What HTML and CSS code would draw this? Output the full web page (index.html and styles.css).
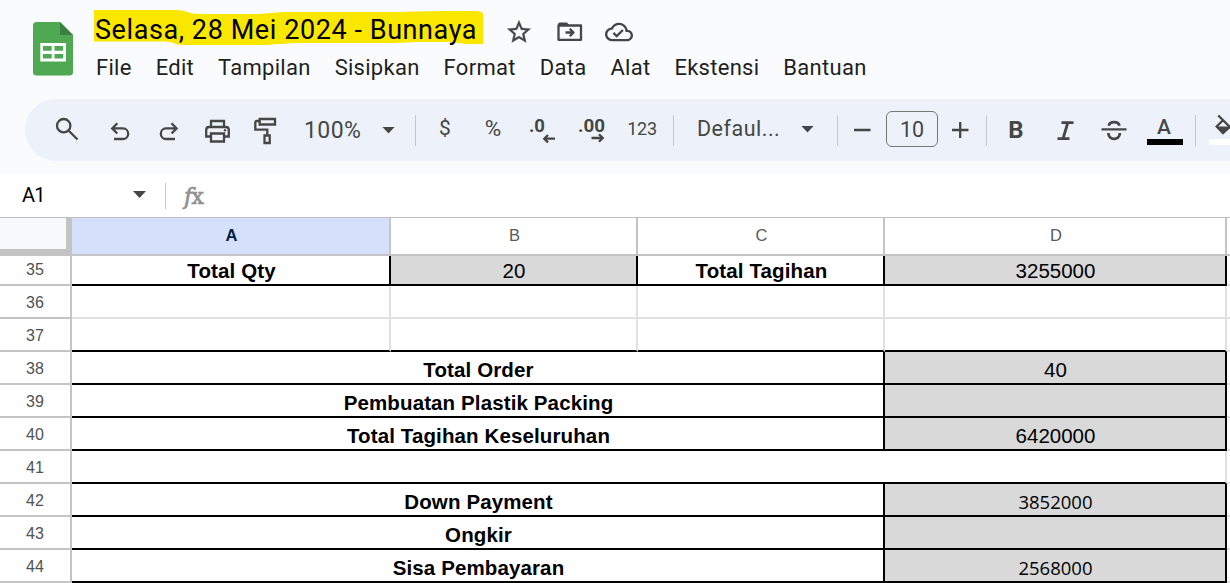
FILE: index.html
```html
<!DOCTYPE html>
<html lang="id">
<head>
    <meta charset="UTF-8">
    <meta name="viewport" content="width=device-width, initial-scale=1.0">
    <title>Selasa, 28 Mei 2024 - Bunnaya</title>
    <link rel="stylesheet" href="styles.css">
</head>
<body>
    <header class="header">
        <svg class="logo" width="40" height="54" viewBox="0 0 40 54">
            <path fill="#4fa953" d="M3.5 0H27l13 13V50a3.500 3.500 0 0 1-3.500 3.500h-33A3.500 3.500 0 0 1 0 50V3.500A3.500 3.500 0 0 1 3.500 0z"/>
            <path fill="#3b8040" d="M27 0l13 13H27z"/>
            <path fill="#fff" fill-rule="evenodd" d="M7.300 21H33v18.500H7.300zM10 24v4.700h8.700V24zM21.500 24v4.700h8.700V24zM10 32v4.500h8.700V32zM21.500 32v4.500h8.700V32z"/>
        </svg>
        <div class="header-main">
            <div class="title-row">
                <div class="doc-title">
                    <svg class="marker" width="390" height="36" viewBox="0 0 390 36">
                        <path fill="#f9e700" d="M0 0H82C92 0 94 4 106 4H160C175 4 180 2 194 2H305C330 1 350 1 380 1Q389 1 389 4V34H376C366 34 364 32 352 32H325L300 33H210C190 33 180 35 165 35H90C80 35 80 31.500 70 31.500H0z"/>
                    </svg>
                    <h1 class="title-text">Selasa, 28 Mei 2024 - Bunnaya</h1>
                </div>
                <svg class="icon-star" width="28" height="28" viewBox="0 0 24 24"><path fill="#444746" stroke="#444746" stroke-width=".3" d="M22 9.240l-7.190-.62L12 2 9.190 8.630 2 9.240l5.460 4.730L5.820 21 12 17.270 18.180 21l-1.630-7.030L22 9.240zM12 15.400l-3.760 2.270 1-4.280-3.320-2.880 4.380-.38L12 6.100l1.710 4.040 4.380.38-3.320 2.880 1 4.280L12 15.400z"/></svg>
                <svg class="icon-folder" width="26" height="20" viewBox="0 0 26 20">
                    <path fill="#444746" d="M1 4V2.500A2 2 0 0 1 3 .5h7L13 4z"/>
                    <path class="stroke" stroke-linejoin="round" d="M1.500 3.500H24V17.800H1.500z M8.500 10.500H16 M12.800 6.800l3.700 3.700-3.700 3.700"/>
                </svg>
                <svg class="icon-cloud" width="28" height="28" viewBox="0 0 24 24"><path fill="#444746" d="M19.350 10.040C18.670 6.590 15.640 4 12 4 9.110 4 6.600 5.640 5.350 8.040 2.340 8.360 0 10.910 0 14c0 3.310 2.690 6 6 6h13c2.760 0 5-2.240 5-5 0-2.640-2.050-4.780-4.650-4.960zM19 18H6c-2.210 0-4-1.790-4-4 0-2.050 1.530-3.760 3.560-3.970l1.070-.11.5-.95C8.080 7.140 9.940 6 12 6c2.620 0 4.880 1.860 5.390 4.430l.3 1.500 1.530.11c1.560.1 2.780 1.410 2.780 2.960 0 1.650-1.350 3-3 3zm-9-3.820l-2.090-2.090L6.500 13.500 10 17l6.010-6.010-1.410-1.410z"/></svg>
            </div>
            <nav class="menu">
                <span class="menu-item">File</span>
                <span class="menu-item">Edit</span>
                <span class="menu-item">Tampilan</span>
                <span class="menu-item">Sisipkan</span>
                <span class="menu-item">Format</span>
                <span class="menu-item">Data</span>
                <span class="menu-item">Alat</span>
                <span class="menu-item">Ekstensi</span>
                <span class="menu-item">Bantuan</span>
            </nav>
        </div>
    </header>

    <div class="toolbar">
        <div class="tool"><svg width="30" height="30"><path class="stroke" d="M16.500 15.500l9 9"/><circle class="stroke" cx="11.700" cy="10.700" r="6.700"/></svg></div>
        <div class="tool undo"><svg width="30" height="30"><path class="stroke" d="M12.300 8.300L7.200 13.400l5.100 5.100M7.200 13.400H18a5.200 5.300 0 0 1 0 10.600H9"/></svg></div>
        <div class="tool"><svg width="30" height="30"><path class="stroke" d="M18.500 8.300l5.100 5.100-5.100 5.100M23.600 13.400H13a5.200 5.300 0 0 0 0 10.600H22"/></svg></div>
        <div class="tool print"><svg width="30" height="30"><path class="stroke" d="M9 12V6h13v6M9 21.500H4.200V15q0-3 3-3h16.600q3 0 3 3v6.500H22M9 18.500h13v8H9z"/><circle cx="23" cy="15.300" r="1.200" fill="#444746"/></svg></div>
        <div class="tool"><svg width="30" height="30"><path class="stroke" d="M9.700 4h15.300v5.500H9.700zM9.700 6H6.800Q5.300 6 5.300 7.500V14.700H17.300V20M14.500 20.500h5.200v7.500h-5.200z"/></svg></div>
        <div class="zoom-label">100%</div>
        <i class="caret zoom-caret"></i>
        <i class="divider after-zoom"></i>
        <div class="tool currency">$</div>
        <div class="tool percent">%</div>
        <div class="tool decimal"><svg width="30" height="30"><text class="dec" x="2" y="16.500" textLength="16" lengthAdjust="spacingAndGlyphs">.0</text><path class="stroke" d="M28 23.700H17.500M21 20l-3.700 3.700 3.700 3.700"/></svg></div>
        <div class="tool decimal-more"><svg width="30" height="30"><text class="dec" x="1" y="16.500" textLength="27" lengthAdjust="spacingAndGlyphs">.00</text><path class="stroke" d="M14.500 23H25.500M22 19.300l3.700 3.700-3.700 3.700"/></svg></div>
        <div class="tool number">123</div>
        <i class="divider after-number"></i>
        <div class="font-label">Defaul...</div>
        <i class="caret font-caret"></i>
        <i class="divider after-font"></i>
        <svg class="minus" width="24" height="24"><path class="stroke" d="M4 12h16.500"/></svg>
        <div class="size-box">10</div>
        <svg class="plus" width="24" height="24"><path class="stroke" d="M4 12h16.500M12.200 4v16"/></svg>
        <i class="divider after-size"></i>
        <div class="tool bold">B</div>
        <div class="tool italic"><svg width="30" height="30"><path class="stroke thick" d="M11.500 7.700H23.500M7.500 23.700H19.500M17.700 8l-4.600 15.500"/></svg></div>
        <div class="tool strike"><svg width="30" height="30"><path class="stroke" d="M2.500 14.400H27.500"/><path class="stroke thick" d="M9.800 10.700C10.500 5.800 19.700 5.800 20.400 10.700M9.400 18C9.400 25.800 20.800 25.800 20.800 18"/></svg></div>
        <div class="text-color"><span class="letter">A</span><span class="swatch"></span></div>
        <i class="divider after-color"></i>
        <div class="fill-color">
            <svg width="30" height="24"><path class="stroke" d="M9.300.5l11.500 11.500-6.800 6-6.300-6.500 6-6"/><path fill="#444746" d="M6.500 11.500h15.500l-8 8z"/></svg>
            <span class="swatch white"></span>
        </div>
    </div>

    <div class="formula-bar">
        <span class="cell-name">A1</span>
        <i class="caret"></i>
        <i class="divider"></i>
        <span class="fx"><em>f</em>x</span>
    </div>

    <main class="sheet">
        <div class="row col-heads">
            <div class="corner"></div>
            <div class="head active">A</div>
            <div class="head">B</div>
            <div class="head">C</div>
            <div class="head">D</div>
            <div class="head"></div>
        </div>
        <div class="row first">
            <div class="row-num">35</div>
            <div class="cell line label">Total Qty</div>
            <div class="cell line gray">20</div>
            <div class="cell line label">Total Tagihan</div>
            <div class="cell line gray">3255000</div>
            <div class="cell"></div>
        </div>
        <div class="row">
            <div class="row-num">36</div>
            <div class="cell"></div>
            <div class="cell"></div>
            <div class="cell"></div>
            <div class="cell"></div>
            <div class="cell"></div>
        </div>
        <div class="row">
            <div class="row-num">37</div>
            <div class="cell line-bottom"></div>
            <div class="cell line-bottom"></div>
            <div class="cell line-bottom"></div>
            <div class="cell line-bottom"></div>
            <div class="cell"></div>
        </div>
        <div class="row">
            <div class="row-num">38</div>
            <div class="cell line label span-3">Total Order</div>
            <div class="cell line gray">40</div>
            <div class="cell"></div>
        </div>
        <div class="row">
            <div class="row-num">39</div>
            <div class="cell line label span-3">Pembuatan Plastik Packing</div>
            <div class="cell line gray"></div>
            <div class="cell"></div>
        </div>
        <div class="row">
            <div class="row-num">40</div>
            <div class="cell line label span-3">Total Tagihan Keseluruhan</div>
            <div class="cell line gray">6420000</div>
            <div class="cell"></div>
        </div>
        <div class="row">
            <div class="row-num">41</div>
            <div class="cell line-bottom span-4"></div>
            <div class="cell"></div>
        </div>
        <div class="row">
            <div class="row-num">42</div>
            <div class="cell line label span-3">Down Payment</div>
            <div class="cell line gray calibri">3852000</div>
            <div class="cell"></div>
        </div>
        <div class="row">
            <div class="row-num">43</div>
            <div class="cell line label span-3">Ongkir</div>
            <div class="cell line gray"></div>
            <div class="cell"></div>
        </div>
        <div class="row">
            <div class="row-num">44</div>
            <div class="cell line label span-3">Sisa Pembayaran</div>
            <div class="cell line gray calibri">2568000</div>
            <div class="cell"></div>
        </div>
    </main>
</body>
</html>
```
FILE: styles.css
```css
* {
    box-sizing: border-box;
    margin: 0;
    padding: 0;
}

body {
    width: 1230px;
    height: 583px;
    overflow: hidden;
    background: #f9fbfd;
    color: #1f1f1f;
    font-family: Roboto, 'Liberation Sans', sans-serif;
}

svg {
    display: block;
    flex: none;
    overflow: visible;
}

.stroke {
    fill: none;
    stroke: #444746;
    stroke-width: 2.3;
}

.thick {
    stroke-width: 2.8;
}

/* Header */
.header {
    display: flex;
    height: 99px;
    padding-left: 33px;
}

.logo {
    margin-top: 22px;
}

.header-main {
    margin-left: 21px;
}

.title-row {
    display: flex;
    height: 46px;
    padding-top: 10px;
}

.doc-title {
    position: relative;
    width: 389px;
    height: 36px;
}

.marker {
    position: absolute;
    left: 0;
    top: 0;
}

.title-text {
    position: relative;
    padding-left: 1px;
    font-size: 27px;
    font-weight: 400;
    line-height: 41px;
    letter-spacing: 0.58px;
    white-space: nowrap;
    color: #000;
}

.icon-star {
    margin: 8px 0 0 22px;
}

.icon-folder {
    margin: 12px 0 0 23.5px;
}

.icon-cloud {
    margin: 8px 0 0 22.5px;
}

.menu {
    display: flex;
    gap: 24px;
    padding-left: 2px;
    font-size: 22px;
    line-height: 44px;
    letter-spacing: 0.28px;
}

/* Toolbar */
.toolbar {
    display: flex;
    align-items: center;
    height: 62px;
    margin-left: 25px;
    padding-left: 18px;
    border-radius: 31px 0 0 31px;
    background: #edf2fa;
    color: #444746;
    overflow: hidden;
}

.toolbar > * {
    flex: none;
}

.tool {
    display: flex;
    align-items: center;
    justify-content: center;
    width: 48px;
    height: 62px;
}

.undo {
    margin-left: 5px;
}

.print,
.decimal,
.italic,
.strike {
    margin-left: 1px;
}

.zoom-label {
    width: 58px;
    margin-left: 15px;
    font-size: 23px;
    letter-spacing: 0.4px;
}

.caret {
    width: 13px;
    height: 7px;
    background: #444746;
    clip-path: polygon(0 0, 100% 0, 50% 100%);
}

.zoom-caret {
    margin-left: 20px;
}

.divider {
    width: 1px;
    height: 31px;
    background: #c7c7c7;
}

.after-zoom {
    margin-left: 20px;
}

.currency {
    margin-left: 5px;
    padding-bottom: 4px;
    font-size: 21px;
}

.percent {
    padding-bottom: 4px;
    font-size: 22.5px;
}

.dec {
    font-size: 19px;
    font-weight: 700;
    fill: #444746;
}

.decimal-more,
.number {
    margin-left: 2px;
}

.number {
    padding-bottom: 4px;
    font-size: 18px;
    letter-spacing: -0.2px;
}

.after-number {
    margin-left: 7px;
}

.font-label {
    width: 84px;
    margin-left: 23px;
    padding-bottom: 3px;
    font-size: 21.5px;
    letter-spacing: 0.5px;
    white-space: nowrap;
}

.font-caret {
    margin: 0 0 2px 20px;
}

.after-font {
    margin-left: 23px;
}

.minus {
    margin: 0 0 1px 12px;
}

.size-box {
    width: 52px;
    height: 36px;
    margin: 0 0 2px 12px;
    border: 1px solid #747775;
    border-radius: 6px;
    font-size: 21.5px;
    line-height: 35px;
    text-align: center;
}

.plus {
    margin: 0 0 1px 10px;
}

.after-size {
    margin-left: 14px;
}

.bold {
    margin-left: 5px;
    font-size: 24px;
    font-weight: 700;
}

.text-color {
    width: 36px;
    height: 30px;
    margin: 0 0 0 9px;
}

.letter {
    display: block;
    height: 24px;
    padding-right: 2px;
    font-size: 21px;
    font-weight: 500;
    line-height: 24px;
    text-align: center;
}

.swatch {
    display: block;
    width: 36px;
    height: 6px;
    background: #000;
}

.white {
    background: #fff;
}

.after-color {
    margin-left: 12px;
}

.fill-color {
    width: 36px;
    height: 30px;
    margin-left: 13px;
}

/* Formula bar */
.formula-bar {
    display: flex;
    align-items: center;
    height: 44px;
    margin-top: 13px;
    padding-left: 22px;
    border-bottom: 1px solid #c0c0c0;
    background: #fff;
}

.cell-name {
    width: 111px;
    padding-bottom: 1px;
    font-size: 20px;
    letter-spacing: -0.8px;
    color: #000;
}

.formula-bar .caret {
    margin-bottom: 2px;
}

.formula-bar .divider {
    height: 26px;
    margin-left: 19px;
}

.fx {
    margin-left: 18px;
    font-family: 'DejaVu Serif', serif;
    font-size: 22.5px;
    line-height: 24px;
    letter-spacing: -1px;
    color: #919191;
    -webkit-text-stroke: 0.7px #919191;
}

/* Sheet */
.sheet {
    background: #fff;
    font-family: 'Liberation Sans', Arial, sans-serif;
}

.row {
    display: grid;
    grid-template-columns: 72px 319px 247px 247px 342px 3px;
    grid-template-rows: 100%;
    height: 33px;
}

.row.first {
    height: 30px;
}

.row.col-heads {
    height: 38px;
}

.corner {
    border-right: 6px solid #c4c4c4;
    border-bottom: 7px solid #c4c4c4;
    background: #f8f9fa;
}

.head {
    padding-left: 2px;
    border-right: 2px solid #c4c4c4;
    border-bottom: 2px solid #c4c4c4;
    font-size: 16.5px;
    line-height: 35px;
    text-align: center;
    color: #575a5a;
}

.head.active {
    background: #d5e1fb;
    font-weight: 700;
    color: #041e49;
}

.row-num {
    padding-top: 2px;
    border-right: 2px solid #c4c4c4;
    border-bottom: 2px solid #c4c4c4;
    font-size: 16px;
    line-height: 29px;
    text-align: center;
    color: #505353;
}

.first .row-num {
    padding-top: 0;
    line-height: 28px;
}

.cell {
    display: flex;
    align-items: flex-end;
    justify-content: center;
    padding: 0 0 1px 1px;
    border-right: 2px solid #e1e1e1;
    border-bottom: 2px solid #e1e1e1;
    font-size: 20.5px;
    line-height: 24px;
    color: #000;
}

.cell:last-child,
.head:last-child {
    border-right: 0;
}

.line {
    border-color: #000;
}

.line-bottom {
    border-bottom-color: #000;
}

.label {
    padding-left: 2px;
    font-weight: 700;
    letter-spacing: 0.12px;
}

.gray {
    background: #d9d9d9;
}

.calibri {
    font-family: 'Open Sans', sans-serif;
    font-size: 18.5px;
}

.span-3 {
    grid-column: span 3;
}

.span-4 {
    grid-column: span 4;
}
```
